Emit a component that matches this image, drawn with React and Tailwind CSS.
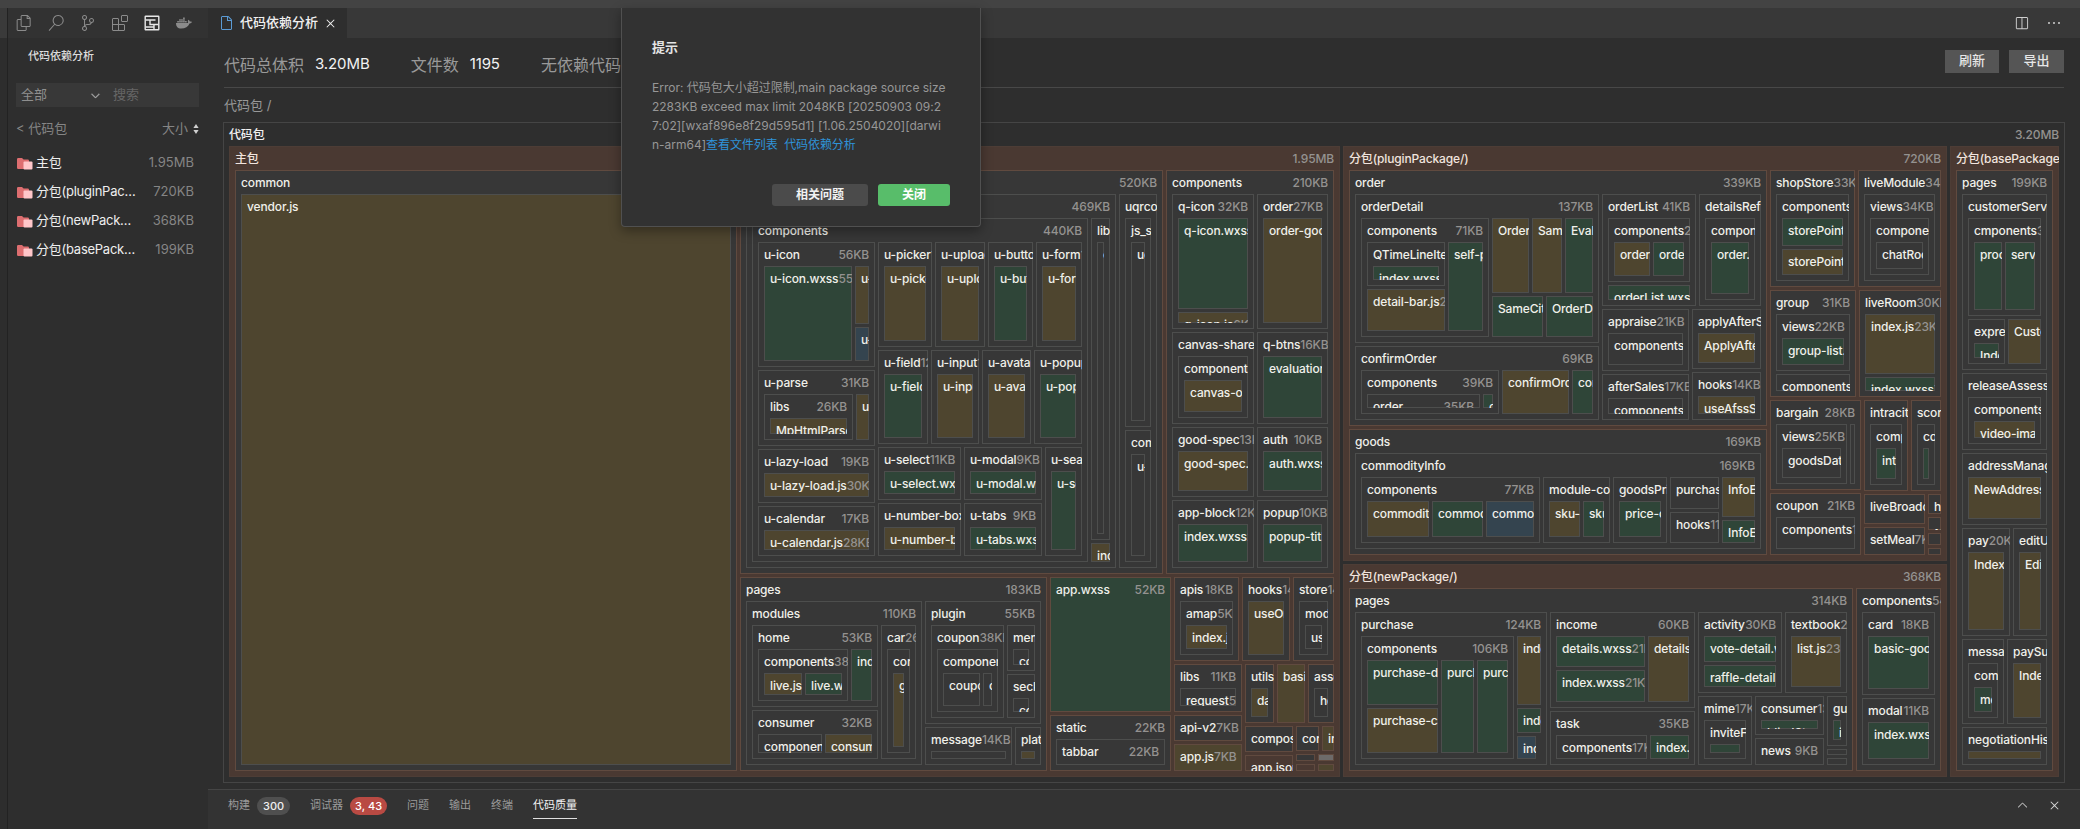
import React from 'react';
import {
  VscFiles,
  VscSearch,
  VscSourceControl,
  VscExtensions,
  VscSplitHorizontal,
  VscEllipsis,
  VscChevronUp,
  VscChevronDown,
  VscClose,
  VscFile,
} from 'react-icons/vsc';
import { FaDocker } from 'react-icons/fa';

// Treemap helpers. size = length on the parent's axis in px, 0 takes what is left
const row = (size, ...items) => ({ type: 'row', size, items });
const col = (size, ...items) => ({ type: 'col', size, items });
const dir = (size, name, kb, ...items) => ({ type: 'box', tone: 'dir', size, name, kb, items });
const pkg = (size, name, kb, ...items) => ({ type: 'box', tone: 'pkg', size, name, kb, items });
const js = (size, name, kb) => ({ type: 'box', tone: 'js', size, name, kb, items: [] });
const css = (size, name, kb) => ({ type: 'box', tone: 'css', size, name, kb, items: [] });
const xml = (size, name, kb) => ({ type: 'box', tone: 'xml', size, name, kb, items: [] });
const json = (size, name, kb) => ({ type: 'box', tone: 'json', size, name, kb, items: [] });
const other = (size) => ({ type: 'box', tone: 'other', size, items: [] });

const uniModules = dir(423, 'uni_modules', '520KB',
  row(0,
    dir(370, 'uview-ui', '469KB',
      row(0,
        dir(336, 'components', '440KB',
          row(0,
            col(117,
              dir(125, 'u-icon', '56KB',
                row(0,
                  css(88, 'u-icon.wxss', '55KB'),
                  col(0, js(58, 'u-icon.js'), xml(0, 'u-icon.wxml')))),
              dir(76, 'u-parse', '31KB',
                row(0,
                  dir(89, 'libs', '26KB', js(0, 'MpHtmlParser.js', '24KB')),
                  js(0, 'u-parse.js'))),
              dir(54, 'u-lazy-load', '19KB', js(0, 'u-lazy-load.js', '30KB')),
              dir(0, 'u-calendar', '17KB', js(0, 'u-calendar.js', '28KB'))),
            col(0,
              row(105,
                dir(54, 'u-picker', '15KB', js(0, 'u-picker.js')),
                dir(50, 'u-upload', '14KB', js(0, 'u-upload.js')),
                dir(45, 'u-button', '13KB', css(0, 'u-button.wxss')),
                dir(0, 'u-form', '12KB', js(0, 'u-form.js'))),
              row(94,
                dir(50, 'u-field', '12KB', css(0, 'u-field.wxss')),
                dir(48, 'u-input', '11KB', js(0, 'u-input.js')),
                dir(49, 'u-avatar', '11KB', js(0, 'u-avatar.js')),
                dir(0, 'u-popup', '11KB', css(0, 'u-popup.wxss'))),
              row(0,
                col(83,
                  dir(53, 'u-select', '11KB', css(0, 'u-select.wxss')),
                  dir(0, 'u-number-box', '10KB', js(0, 'u-number-box.js'))),
                col(78,
                  dir(53, 'u-modal', '9KB', css(0, 'u-modal.wxss')),
                  dir(0, 'u-tabs', '9KB', css(0, 'u-tabs.wxss'))),
                dir(0, 'u-search', '8KB', css(0, 'u-search.wxss')))))),
        col(0,
          dir(322, 'lib', '', dir(0, 'config')),
          js(0, 'index.js')))),
    dir(0, 'uqrcode', '50KB',
      col(0,
        dir(209, 'js_sdk', '36KB', dir(0, 'uqrcode')),
        dir(0, 'common', '14KB', dir(0, 'u-qrcode'))))));

const components = dir(0, 'components', '210KB',
  row(0,
    col(82,
      dir(135, 'q-icon', '32KB',
        col(0, css(91, 'q-icon.wxss', '26KB'), js(0, 'q-icon.js', '6KB'))),
      dir(92, 'canvas-share', '17KB', dir(0, 'components', '17KB', js(0, 'canvas-order.js'))),
      dir(70, 'good-spec', '13KB', js(0, 'good-spec.js')),
      dir(0, 'app-block', '12KB', css(0, 'index.wxss', '2KB'))),
    col(0,
      dir(135, 'order', '27KB', js(0, 'order-goods.js')),
      dir(92, 'q-btns', '16KB', css(0, 'evaluation.wxss')),
      dir(70, 'auth', '10KB', css(0, 'auth.wxss')),
      dir(0, 'popup', '10KB', css(0, 'popup-title.wxss')))));

const mainPages = dir(307, 'pages', '183KB',
  row(0,
    dir(176, 'modules', '110KB',
      row(0,
        col(126,
          dir(82, 'home', '53KB',
            row(0,
              dir(90, 'components', '38KB',
                row(0, js(38, 'live.js'), css(0, 'live.wxss'))),
              css(0, 'index.wxss'))),
          dir(0, 'consumer', '32KB',
            row(0, dir(64, 'components'), js(0, 'consumer.js')))),
        dir(0, 'car', '26KB', dir(0, 'cor', '', js(0, 'goods.js'))))),
    col(0,
      dir(123, 'plugin', '55KB',
        row(0,
          dir(73, 'coupon', '38KB',
            dir(0, 'components', '', row(0, dir(37, 'coupon'), dir(0, 'card')))),
          col(0,
            dir(46, 'member', '', dir(0, 'components')),
            dir(0, 'seckill', '', dir(0, 'components'))))),
      row(0,
        dir(87, 'message', '14KB', dir(0, '')),
        dir(0, 'platform', '', js(0, ''))))));

const mainPackage = pkg(1111, '主包', '1.95MB',
  row(0,
    dir(502, 'common', '', js(0, 'vendor.js')),
    col(0,
      row(404, uniModules, components),
      row(0,
        mainPages,
        col(121,
          css(135, 'app.wxss', '52KB'),
          dir(0, 'static', '22KB', dir(0, 'tabbar', '22KB'))),
        col(0,
          row(84,
            dir(65, 'apis', '18KB', dir(0, 'amap', '5KB', js(0, 'index.js'))),
            dir(48, 'hooks', '14KB', js(0, 'useOrder.js')),
            dir(0, 'store', '14KB', dir(0, 'modules', '', dir(0, 'user')))),
          row(0,
            col(68,
              dir(48, 'libs', '11KB', dir(0, 'request', '5KB')),
              dir(26, 'api-v2', '7KB'),
              js(0, 'app.js', '7KB')),
            col(0,
              row(59,
                dir(29, 'utils', '', js(0, 'date.js')),
                js(28, 'basic.js'),
                dir(0, 'assets', '', dir(0, 'head'))),
              row(0,
                col(48, dir(26, 'composables'), json(0, 'app.json')),
                col(0,
                  row(25, dir(23, 'config'), js(0, 'index.js')),
                  row(7, dir(19, ''), other(0)),
                  row(0, json(19, ''), js(0, '')))))))))));

const orderModule = dir(256, 'order', '339KB',
  row(0,
    col(244,
      dir(149, 'orderDetail', '137KB',
        row(0,
          dir(128, 'components', '71KB',
            row(0,
              col(78,
                dir(44, 'QTimeLineItem', '', css(0, 'index.wxss')),
                js(0, 'detail-bar.js', '22KB')),
              css(0, 'self-pick.wxss'))),
          col(0,
            row(75, js(37, 'OrderInfo.js'), js(30, 'SameCity.js'), css(0, 'Evaluate.wxss')),
            row(0, css(51, 'SameCity.wxss'), css(0, 'OrderDetail.wxss'))))),
      dir(0, 'confirmOrder', '69KB',
        row(0,
          dir(138, 'components', '39KB',
            row(0, dir(113, 'order', '35KB'), css(0, 'coupon'))),
          js(67, 'confirmOrder.js'),
          css(0, 'confirm.wxss')))),
    col(0,
      row(112,
        dir(94, 'orderList', '41KB',
          col(0,
            dir(64, 'components', '27KB', row(0, js(36, 'order.js'), css(0, 'order.wxss'))),
            css(0, 'orderList.wxss'))),
        dir(0, 'detailsRefund', '', dir(0, 'components', '', css(0, 'order.wxss')))),
      row(0,
        col(87,
          dir(62, 'appraise', '21KB', dir(0, 'components', '9KB')),
          dir(0, 'afterSales', '17KB', dir(0, 'components', '9KB'))),
        col(0,
          dir(60, 'applyAfterSales', '', js(0, 'ApplyAfter.js')),
          dir(0, 'hooks', '14KB', js(0, 'useAfssSales.js')))))));

const goodsModule = dir(0, 'goods', '169KB',
  dir(0, 'commodityInfo', '169KB',
    row(0,
      dir(179, 'components', '77KB',
        row(0, js(62, 'commodity.js'), css(51, 'commodity.wxss'), xml(0, 'commodity.wxml'))),
      dir(67, 'module-content', '', row(0, js(31, 'sku-info.js'), css(0, 'sku.wxss'))),
      dir(54, 'goodsPrice', '', css(0, 'price-card.wxss')),
      col(49, dir(32, 'purchase'), dir(0, 'hooks', '11KB')),
      col(0, js(40, 'InfoExtra.js'), css(0, 'InfoExtra.wxss')))));

const pluginPackage = pkg(415, '分包(pluginPackage/)', '720KB',
  row(0,
    col(418, orderModule, goodsModule),
    col(0,
      row(117,
        dir(85, 'shopStore', '33KB',
          dir(0, 'components', '', col(0, css(28, 'storePoint.wxss'), js(0, 'storePoint.js')))),
        dir(0, 'liveModule', '34KB',
          dir(0, 'views', '34KB', dir(0, 'components', '', dir(0, 'chatRoom'))))),
      row(107,
        dir(86, 'group', '31KB',
          col(0,
            dir(57, 'views', '22KB', css(0, 'group-list.wxss')),
            dir(0, 'components', '9KB'))),
        dir(0, 'liveRoom', '30KB', col(0, js(60, 'index.js', '23KB'), css(0, 'index.wxss', '7KB')))),
      row(0,
        col(91,
          dir(90, 'bargain', '28KB',
            row(0, dir(71, 'views', '25KB', dir(0, 'goodsDataList')), dir(0, ''))),
          dir(0, 'coupon', '21KB', dir(0, 'components', '18KB'))),
        col(0,
          row(91,
            dir(44, 'intracity', '', dir(0, 'components', '', css(0, 'intracity.wxss'))),
            dir(0, 'score', '', dir(0, 'components', '', css(0, '')))),
          row(0,
            col(61, dir(30, 'liveBroadcast'), dir(0, 'setMeal', '7KB')),
            col(0, dir(20, 'hooks'), dir(13, '~'), dir(12, '··'), dir(0, ''))))))));

const newPackage = pkg(0, '分包(newPackage/)', '368KB',
  row(0,
    dir(504, 'pages', '314KB',
      row(0,
        dir(192, 'purchase', '124KB',
          row(0,
            dir(153, 'components', '106KB',
              row(0,
                col(71, css(45, 'purchase-detail.wxss'), js(0, 'purchase-card.js')),
                css(33, 'purchase.wxss'),
                css(0, 'purchase.wxss'))),
            col(0,
              js(69, 'index.js'),
              css(25, 'index.wxss'),
              row(0, xml(19, 'index.wxml'))))),
        col(145,
          dir(96, 'income', '60KB',
            row(0,
              col(89, css(31, 'details.wxss', '21KB'), css(0, 'index.wxss', '21KB')),
              js(0, 'details.js'))),
          dir(0, 'task', '35KB', row(0, dir(91, 'components', '17KB'), css(0, 'index.wxss')))),
        col(0,
          row(81,
            dir(84, 'activity', '30KB',
              col(0, css(26, 'vote-detail.wxss'), css(0, 'raffle-detail.wxss'))),
            dir(0, 'textbook', '28KB', js(0, 'list.js', '23KB'))),
          row(0,
            dir(54, 'mime', '17KB', dir(0, 'inviteFriend', '', css(0, ''))),
            col(69,
              dir(39, 'consumer', '13KB', css(0, 'blindStock.wxss')),
              dir(0, 'news', '9KB')),
            col(0, dir(50, 'guide', '', css(0, 'i')), dir(6, ''), dir(0, '')))))),
    dir(0, 'components', '54KB',
      col(0,
        dir(83, 'card', '18KB', css(0, 'basic-goods.wxss')),
        dir(0, 'modal', '11KB', css(0, 'index.wxss'))))));

const basePackage = pkg(0, '分包(basePackage/)', '',
  dir(0, 'pages', '199KB',
    col(0,
      dir(176, 'customerService', '',
        col(0,
          dir(98, 'cmponents', '38KB', row(0, css(28, 'process.wxss'), css(0, 'service.wxss'))),
          row(0, dir(37, 'express', '', css(0, 'Index.wxss')), js(0, 'Customer.js')))),
      dir(77, 'releaseAssess', '', dir(0, 'components', '', js(0, 'video-image.js'))),
      dir(72, 'addressManage', '', js(0, 'NewAddress.js')),
      row(108,
        dir(48, 'pay', '20KB', js(0, 'Index.js')),
        dir(0, 'editUser', '', js(0, 'EditUser.js'))),
      row(85,
        dir(42, 'message', '', dir(0, 'com', '', css(0, 'message.wxss'))),
        dir(0, 'paySuccess', '', js(0, 'Index.js'))),
      dir(0, 'negotiationHistory', '', js(0, '')))));

const treemap = row(0, mainPackage, col(604, pluginPackage, newPackage), basePackage);

const tones = {
  dir: 'bg-[#373737]',
  pkg: 'bg-[#4a3932]',
  js: 'bg-[#4e452f]',
  css: 'bg-[#2f4538]',
  xml: 'bg-[#34444f]',
  json: 'bg-[#4a3932]',
  other: 'bg-[#6d6a69]',
};

const Node = ({ node, inPackage }) => {
  const style = { flex: node.size ? `0 0 ${node.size}px` : '1 1 0px' };

  if (node.type !== 'box') {
    return (
      <div
        className={`flex gap-[3px] min-w-0 min-h-0 ${node.type === 'row' ? 'flex-row' : 'flex-col'}`}
        style={style}
      >
        {node.items.map((item, i) => (
          <Node key={i} node={item} inPackage={inPackage} />
        ))}
      </div>
    );
  }

  const isPackage = node.tone === 'pkg';
  const ring = isPackage ? 'ring-[#4d3d36]' : inPackage ? 'ring-[#604a3f]' : 'ring-[#4d4e4d]';

  return (
    <div
      className={`flex flex-col min-w-0 min-h-0 overflow-hidden ring-1 ring-inset ${ring} ${tones[node.tone]}`}
      style={style}
    >
      <div className="flex justify-between shrink-0 h-6 pt-px px-1.5 leading-[23px] whitespace-nowrap">
        <span className={`shrink-0 ${isPackage ? 'text-[#f1e4de]' : 'text-[#f0f0ea]'}`}>{node.name}</span>
        <span className="shrink-0 text-[#949290]">{node.kb}</span>
      </div>
      {node.items.length > 0 && (
        <div className="flex flex-1 min-h-0 px-1.5 pb-1.5">
          {node.items.map((item, i) => (
            <Node key={i} node={item} inPackage={isPackage} />
          ))}
        </div>
      )}
    </div>
  );
};

const packages = [
  { name: '主包', size: '1.95MB' },
  { name: '分包(pluginPackage/)', size: '720KB' },
  { name: '分包(newPackage/)', size: '368KB' },
  { name: '分包(basePackage/)', size: '199KB' },
];

const FolderIcon = () => (
  <svg viewBox="0 0 16 14" className="w-4 h-3.5 shrink-0 mt-[3px]">
    <path d="M0 2.200Q0 1 1.200 1H5l1.600 1.600h4.200Q12 2.600 12 3.800V12H1.200Q0 12 0 10.800Z" fill="#dd6e70" />
    <rect x="6.500" y="4.500" width="9" height="8" rx="1" fill="#ffc6c9" />
  </svg>
);

const AnalysisIcon = () => (
  <svg viewBox="0 0 16 16" className="w-4 h-4" fill="none" stroke="#e8e8e8" strokeWidth="1.400">
    <rect x="1.200" y="1.200" width="13.600" height="13.600" rx="0.500" />
    <path d="M1.500 5h10M6 5v4.500h8.500M1.500 12h8.500M10 9.500v5" />
  </svg>
);

const Sidebar = () => (
  <aside className="flex flex-col w-[201px] shrink-0 border-l border-[#222] bg-[#2e2e2e]">
    <div className="flex items-center h-[30px] bg-[#323232] pl-2 gap-4 text-[#8b8b8b]">
      <VscFiles size={16} />
      <VscSearch size={16} />
      <VscSourceControl size={16} />
      <VscExtensions size={16} />
      <AnalysisIcon />
      <FaDocker size={16} />
    </div>
    <h2 className="mt-[9px] pl-5 text-[11px] leading-[18px] font-medium text-[#dcdcdc]">代码依赖分析</h2>
    <div className="flex items-center h-6 mt-[18px] ml-2 mr-[9px] bg-[#383838] text-[13px]">
      <div className="flex items-center justify-between w-[92px] pl-[5px] pr-1.5 text-[#8f8f8f]">
        全部
        <VscChevronDown size={13} className="text-[#aaa]" strokeWidth={0.6} />
      </div>
      <span className="pl-[5px] text-[#666]">搜索</span>
    </div>
    <div className="flex items-center justify-between mt-[11px] pl-2 pr-[9px] h-[22px] text-[13px] text-[#858585]">
      <span>&lt; 代码包</span>
      <span className="flex items-center gap-[5px]">
        大小
        <svg viewBox="0 0 6 10" className="w-1.5 h-2.5" fill="#d0d0d0">
          <path d="M3 0l2.600 4H.4zM3 10L.4 6h5.200z" />
        </svg>
      </span>
    </div>
    <ul className="mt-2">
      {packages.map((p) => (
        <li key={p.name} className="flex items-center h-[29px] pl-[9px] pr-3.5 text-[13px]">
          <FolderIcon />
          <span className="w-[102px] ml-[3px] truncate tracking-[-0.25px] text-[#eee]">{p.name}</span>
          <span className="ml-auto text-[#858585]">{p.size}</span>
        </li>
      ))}
    </ul>
  </aside>
);

const Stat = ({ label, value }) => (
  <div className="flex items-center gap-[11px] mr-[41px]">
    <span className="text-[16px] text-[#999]">{label}</span>
    <span className="text-[15px] tracking-[-0.1px] text-[#f2f2f2]">{value}</span>
  </div>
);

const BottomPanel = () => (
  <div className="flex items-center h-10 shrink-0 border-t border-[#454545] bg-[#333] pl-5 pr-[18px] pb-2 text-[11px] text-[#9a9a9a]">
    <span>构建</span>
    <span className="ml-[7px] px-[6px] h-[18px] leading-[18px] rounded-full bg-[#4f4f4f] text-[#f0f0f0] font-medium">300</span>
    <span className="ml-5">调试器</span>
    <span className="ml-[7px] px-[5px] h-[18px] leading-[18px] rounded-full bg-[#b94a43] text-white font-medium">3, 43</span>
    <span className="ml-5">问题</span>
    <span className="ml-5">输出</span>
    <span className="ml-5">终端</span>
    <span className="ml-5 h-[26px] leading-[25px] border-b border-[#e0e0e0] text-[#f0f0f0]">代码质量</span>
    <VscChevronUp size={15} className="ml-auto text-[#c5c5c5]" />
    <VscClose size={15} className="ml-[17px] text-[#d5d5d5]" />
  </div>
);

const ErrorDialog = () => (
  <div className="absolute left-[621px] top-2 w-[360px] h-[219px] px-[30px] pt-[30px] bg-[#323232] border border-t-0 border-[#505050] rounded-b-[4px] shadow-[0_4px_12px_rgba(0,0,0,0.35)]">
    <h3 className="text-[13px] leading-[18px] font-bold text-[#e4e4e4]">提示</h3>
    <p className="mt-[22px] text-[12px] leading-[19px] tracking-[-0.01px] text-[#979797] whitespace-nowrap">
      Error: 代码包大小超过限制,main package source size
      <br />
      2283KB exceed max limit 2048KB [20250903 09:2
      <br />
      7:02][wxaf896e8f29d595d1] [1.06.2504020][darwi
      <br />
      n-arm64]<span className="text-[#2f92d8] tracking-[-0.08px]">查看文件列表&nbsp; 代码依赖分析</span>
    </p>
    <div className="flex justify-end gap-2.5 mt-[30px] text-[12px] leading-[22px] font-bold text-center text-[#f2f2f2]">
      <button className="w-24 h-[22px] rounded-[3px] bg-[#4b4b4b]">相关问题</button>
      <button className="w-[72px] h-[22px] rounded-[3px] bg-[#58bd6a] text-white">关闭</button>
    </div>
  </div>
);

const App = () => {
  return (
    <div className="relative flex flex-col w-[2080px] h-[829px] overflow-hidden bg-[#2e2e2e] font-[Inter,'Noto_Sans_CJK_SC',sans-serif]">
      <div className="h-2 shrink-0 bg-[#434343]" />
      <div className="flex flex-1 min-h-0">
        <div className="w-[7px] shrink-0 bg-[#2d2d2d]">
          <div className="h-[30px] bg-[#3a3a3a]" />
        </div>
        <Sidebar />

        <main className="flex flex-col flex-1 min-w-0">
          {/* Tabs */}
          <div className="flex items-center h-[30px] shrink-0 bg-[#383838]">
            <div className="flex items-center w-[139px] h-full pl-2.5 bg-[#2e2e2e] text-[13px] font-medium text-[#f0f0f0]">
              <VscFile size={16} className="text-[#5b9bd5]" />
              <span className="ml-1.5">代码依赖分析</span>
              <VscClose size={15} className="ml-[5px]" />
            </div>
            <VscSplitHorizontal size={15} className="ml-auto text-[#cfcfcf]" />
            <VscEllipsis size={16} className="ml-[17px] mr-[18px] text-[#cfcfcf]" />
          </div>

          {/* Package summary */}
          <div className="flex items-center h-[50px] shrink-0 ml-4 mr-4 pt-1 border-b border-[#484848]">
            <Stat label="代码总体积" value="3.20MB" />
            <Stat label="文件数" value="1195" />
            <Stat label="无依赖代码文件" value="12" />
            <div className="flex gap-2.5 ml-auto mb-[7px] text-[13px] font-medium text-[#e6e6e6]">
              <button className="w-[54px] h-[23px] bg-[#555]">刷新</button>
              <button className="w-[55px] h-[23px] bg-[#555]">导出</button>
            </div>
          </div>
          <div className="h-[34px] shrink-0 pl-4 text-[13px] leading-[35px] text-[#999]">代码包 /</div>

          {/* Treemap */}
          <div className="flex flex-col h-[661px] shrink-0 mx-[15px] border border-[#454545] text-[12px] font-medium tracking-[-0.14px]">
            <div className="flex justify-between shrink-0 h-[23px] px-[5px] leading-[23px]">
              <span className="text-[#f0f0f0]">代码包</span>
              <span className="text-[#949290]">3.20MB</span>
            </div>
            <div className="flex flex-1 min-h-0 px-[5px] pb-[5px]">
              <Node node={treemap} inPackage={false} />
            </div>
          </div>
          <div className="flex-1" />
          <BottomPanel />
        </main>
      </div>
      <ErrorDialog />
    </div>
  );
};

export default App;
